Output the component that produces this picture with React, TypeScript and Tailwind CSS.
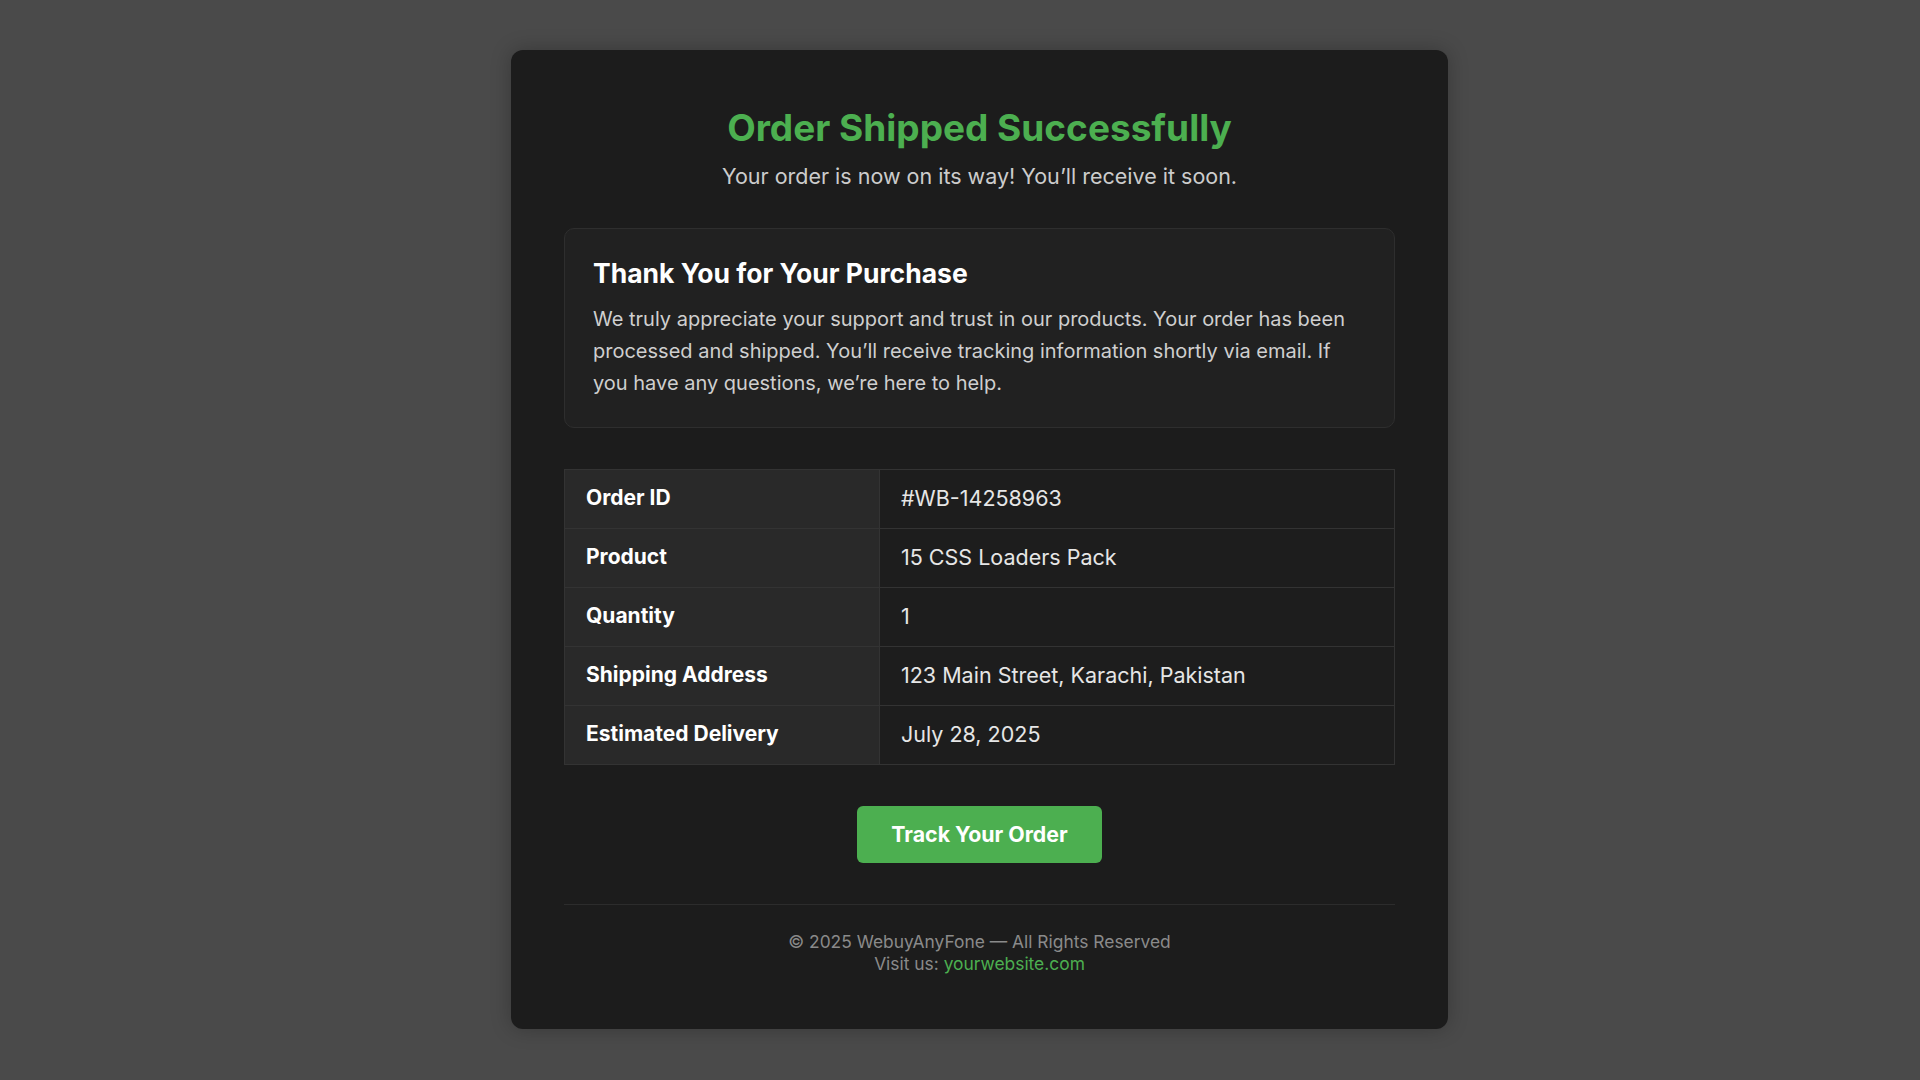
const rows: [string, string][] = [
  ["Order ID", "#WB-14258963"],
  ["Product", "15 CSS Loaders Pack"],
  ["Quantity", "1"],
  ["Shipping Address", "123 Main Street, Karachi, Pakistan"],
  ["Estimated Delivery", "July 28, 2025"],
];

export default function App() {
  return (
    <div
      className="min-h-screen bg-[#4a4a4a] pt-[50px] pb-[53px] pl-[39px] flex justify-center"
      style={{ fontFamily: "Inter, 'Noto Sans', sans-serif" }}
    >
      <div className="w-[937px] rounded-[12px] bg-[#1c1c1c] px-[53px] pt-[57px] pb-[54px] shadow-[0_0_20px_rgba(0,0,0,0.25)]">
        {/* Header */}
        <div className="text-center">
          <h1 className="text-[37px] leading-[42px] font-bold text-[#4caf50]">
            Order Shipped Successfully
          </h1>
          <p className="mt-[12px] text-[21.5px] leading-[30px] text-[#cccccc]">
            Your order is now on its way! You’ll receive it soon.
          </p>
        </div>

        {/* Thank-you box */}
        <div className="mt-[37px] rounded-[10px] border border-[#2e2e2e] bg-[#212121] px-[28px] pt-[29px] pb-[28px]">
          <h2 className="text-[26.5px] leading-[30px] font-bold text-white">
            Thank You for Your Purchase
          </h2>
          <p className="mt-[15px] text-[20px] leading-[32px] text-[#cfcfcf]">
            We truly appreciate your support and trust in our products. Your order has been
            processed and shipped. You’ll receive tracking information shortly via email. If
            you have any questions, we’re here to help.
          </p>
        </div>

        {/* Order details */}
        <div className="mt-[41px] grid grid-cols-[315px_1fr] border border-[#333333] leading-[28px]">
          {rows.map(([label, value], i) => (
            <div key={label} className="contents">
              <div
                className={
                  "bg-[#292929] px-[21px] pt-[14px] pb-[16px] text-[21px] font-bold text-white border-r border-[#333333]" +
                  (i < rows.length - 1 ? " border-b" : "")
                }
              >
                {label}
              </div>
              <div
                className={
                  "bg-[#1d1d1d] px-[21px] pt-[14px] pb-[16px] text-[21.5px] text-[#e6e6e6] border-[#333333]" +
                  (i < rows.length - 1 ? " border-b" : "")
                }
              >
                {value}
              </div>
            </div>
          ))}
        </div>

        {/* Button */}
        <div className="mt-[41px] flex justify-center">
          <button className="h-[57px] w-[245px] rounded-[6px] bg-[#4caf50] text-[21.3px] font-bold text-white">
            Track Your Order
          </button>
        </div>

        {/* Footer */}
        <div className="mt-[41px] border-t border-[#2c2c2c] pt-[26px] text-center text-[17.4px] leading-[22px] text-[#8a8a8a]">
          <p>© 2025 WebuyAnyFone — All Rights Reserved</p>
          <p>
            Visit us: <span className="text-[#4caf50]">yourwebsite.com</span>
          </p>
        </div>
      </div>
    </div>
  );
}
